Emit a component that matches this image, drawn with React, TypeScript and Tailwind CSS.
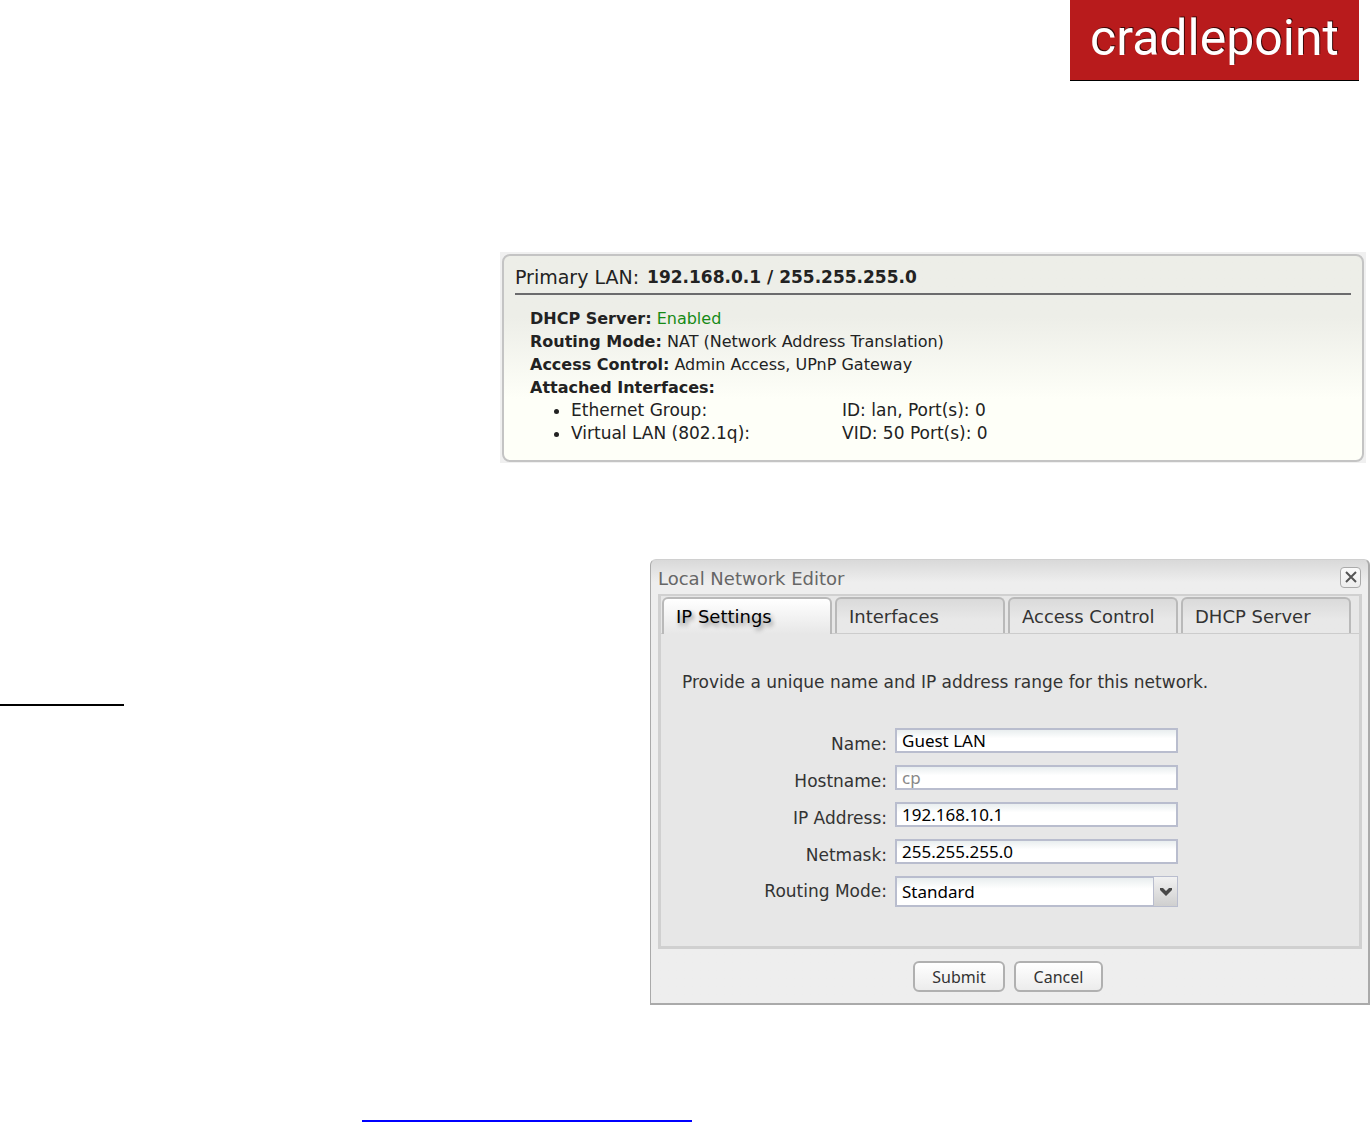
import React from 'react';

const summary = [
  { label: 'DHCP Server:', value: 'Enabled', valueClass: 'text-[#168a16]' },
  { label: 'Routing Mode:', value: 'NAT (Network Address Translation)', valueClass: '' },
  { label: 'Access Control:', value: 'Admin Access, UPnP Gateway', valueClass: '' },
  { label: 'Attached Interfaces:', value: '', valueClass: '' },
];

const interfaces = [
  { name: 'Ethernet Group:', detail: 'ID: lan, Port(s): 0' },
  { name: 'Virtual LAN (802.1q):', detail: 'VID: 50 Port(s): 0' },
];

const tabs = ['IP Settings', 'Interfaces', 'Access Control', 'DHCP Server'];

const fields = [
  { id: 'name', label: 'Name:', value: 'Guest LAN', placeholder: '' },
  { id: 'hostname', label: 'Hostname:', value: '', placeholder: 'cp' },
  { id: 'ip', label: 'IP Address:', value: '192.168.10.1', placeholder: '' },
  { id: 'netmask', label: 'Netmask:', value: '255.255.255.0', placeholder: '' },
];

const Logo: React.FC = () => (
  <div className="mr-[11px] flex h-[81px] w-[289px] items-center justify-center border-b border-black bg-[#b81b1c] pb-1">
    <span className="font-['Roboto',sans-serif] text-[50px] leading-none text-white [text-shadow:1px_-1px_0_#3a0808]">
      cradlepoint
    </span>
  </div>
);

const LanSummary: React.FC = () => (
  <section className="mr-1 ml-[500px] bg-[#f0f0f0] px-[2px] pt-[2px] pb-px">
    <div className="h-[208px] rounded-lg border-2 border-[#c4c4c4] bg-linear-to-b from-[#edeee8] from-30% to-[#fefff8] to-70% pr-[11px] pl-[11px] text-[16px] leading-[23px] text-[#222]">
      <h2 className="flex h-[39px] items-center gap-2 border-b-2 border-[#6b6b6d] pt-[5px] text-[19px]">
        Primary LAN: <b className="text-[17px]">192.168.0.1 / 255.255.255.0</b>
      </h2>
      <div className="pt-3 pl-[15px]">
        {summary.map((row) => (
          <p key={row.label}>
            <b>{row.label}</b> <span className={row.valueClass}>{row.value}</span>
          </p>
        ))}
        <ul className="list-disc pl-[41px] text-[17px]">
          {interfaces.map((item) => (
            <li key={item.name}>
              <span className="inline-block w-[271px]">{item.name}</span>
              {item.detail}
            </li>
          ))}
        </ul>
      </div>
    </div>
  </section>
);

const NetworkEditor: React.FC = () => (
  <section className="flex-1 rounded-t-md border-t border-r-2 border-b-2 border-l border-t-[#d0d0d0] border-r-[#aaa] border-b-[#aaa] border-l-[#aaa] bg-[#ededed] bg-linear-to-b from-[#d9d9d9] to-[#eeeeee] to-5% pr-[6px] pb-[11px] pl-[7px] text-[17px] text-[#333]">
    <header className="flex h-[34px] items-center justify-between pr-px">
      <h2 className="pt-[3px] text-[18px] text-[#666]">Local Network Editor</h2>
      <button
        type="button"
        aria-label="Close"
        className="flex size-[21px] items-center justify-center rounded border border-[#aaa] bg-linear-to-b from-[#fafafa] to-[#eee]"
      >
        <svg viewBox="0 0 12 12" className="size-3" stroke="#555" strokeWidth="2">
          <path d="M1 1 L11 11 M11 1 L1 11" />
        </svg>
      </button>
    </header>

    <div className="border-t-2 border-r-3 border-b-3 border-l-3 border-[#d0d0d0] bg-[#e7e7e7]">
      <div role="tablist" className="flex gap-[3px] border-b border-[#ccc] px-px pt-px text-[18px]">
        {tabs.map((tab, index) => (
          <button
            key={tab}
            type="button"
            role="tab"
            aria-selected={index === 0}
            className={
              index === 0
                ? '-mb-px h-[37px] w-[170px] rounded-t-md border-2 border-b-0 border-[#b9b9b9] bg-linear-to-b from-white to-[#e7e7e7] pl-3 text-left text-black [text-shadow:2px_3px_4px_#888]'
                : 'h-[36px] w-[170px] rounded-t-md border-2 border-b-0 border-[#b9b9b9] bg-linear-to-b from-[#dadada] to-[#e8e8e8] to-60% pl-3 text-left'
            }
          >
            {tab}
          </button>
        ))}
      </div>

      <form className="h-[312px] pt-9">
        <p className="pl-[21px] leading-6">Provide a unique name and IP address range for this network.</p>
        <div className="mt-[34px] grid grid-cols-[226px_283px] gap-x-2 gap-y-3">
          {fields.map((field) => (
            <React.Fragment key={field.id}>
              <label htmlFor={field.id} className="pt-2 text-right leading-[17px]">
                {field.label}
              </label>
              <input
                id={field.id}
                type="text"
                defaultValue={field.value}
                placeholder={field.placeholder}
                className="h-[25px] border-2 border-[#b9bdce] bg-linear-to-b from-[#e9eeef] to-white to-40% px-[5px] font-['Noto_Sans',sans-serif] text-[17px] text-black placeholder:text-[#888]"
              />
            </React.Fragment>
          ))}
          <label htmlFor="routing" className="text-right leading-[31px]">
            Routing Mode:
          </label>
          <div className="relative">
            <select
              id="routing"
              className="block h-[31px] w-full appearance-none border-2 border-[#b9bdce] bg-linear-to-b from-[#e9eeef] to-white to-40% px-[5px] font-['Noto_Sans',sans-serif] text-[17px] text-black"
            >
              <option>Standard</option>
            </select>
            <span className="pointer-events-none absolute inset-y-px right-px flex w-6 items-center justify-center border-l border-[#b9bdce] bg-linear-to-b from-[#f2f2f2] to-[#cfcfcf]">
              <svg viewBox="0 0 14 8" className="h-2 w-[14px]">
                <path d="M1 0 H4 L7 3 L10 0 H13 V2 L7 8 L1 2 Z" fill="#484848" />
              </svg>
            </span>
          </div>
        </div>
      </form>
    </div>

    <footer className="flex justify-center gap-[9px] pt-3 pr-1">
      <button
        type="button"
        className="h-[31px] w-[92px] rounded-md border-2 border-[#b0b0b0] bg-linear-to-b from-white to-[#ececec] font-['Noto_Sans',sans-serif] text-[16px] leading-none"
      >
        Submit
      </button>
      <button
        type="button"
        className="h-[31px] w-[89px] rounded-md border-2 border-[#b0b0b0] bg-linear-to-b from-white to-[#ececec] font-['Noto_Sans',sans-serif] text-[16px] leading-none"
      >
        Cancel
      </button>
    </footer>
  </section>
);

const App: React.FC = () => {
  return (
    <main className="bg-white font-['DejaVu_Sans',sans-serif]">
      <div className="flex justify-end pb-[171px]">
        <Logo />
      </div>
      <LanSummary />
      <div className="flex pt-24">
        <div className="w-[650px] shrink-0 pt-[145px]">
          <hr className="h-[2px] w-[124px] border-0 bg-black" />
        </div>
        <NetworkEditor />
      </div>
      <hr className="mt-[115px] ml-[362px] h-[2px] w-[330px] border-0 bg-[#0000ff]" />
    </main>
  );
};

export default App;
